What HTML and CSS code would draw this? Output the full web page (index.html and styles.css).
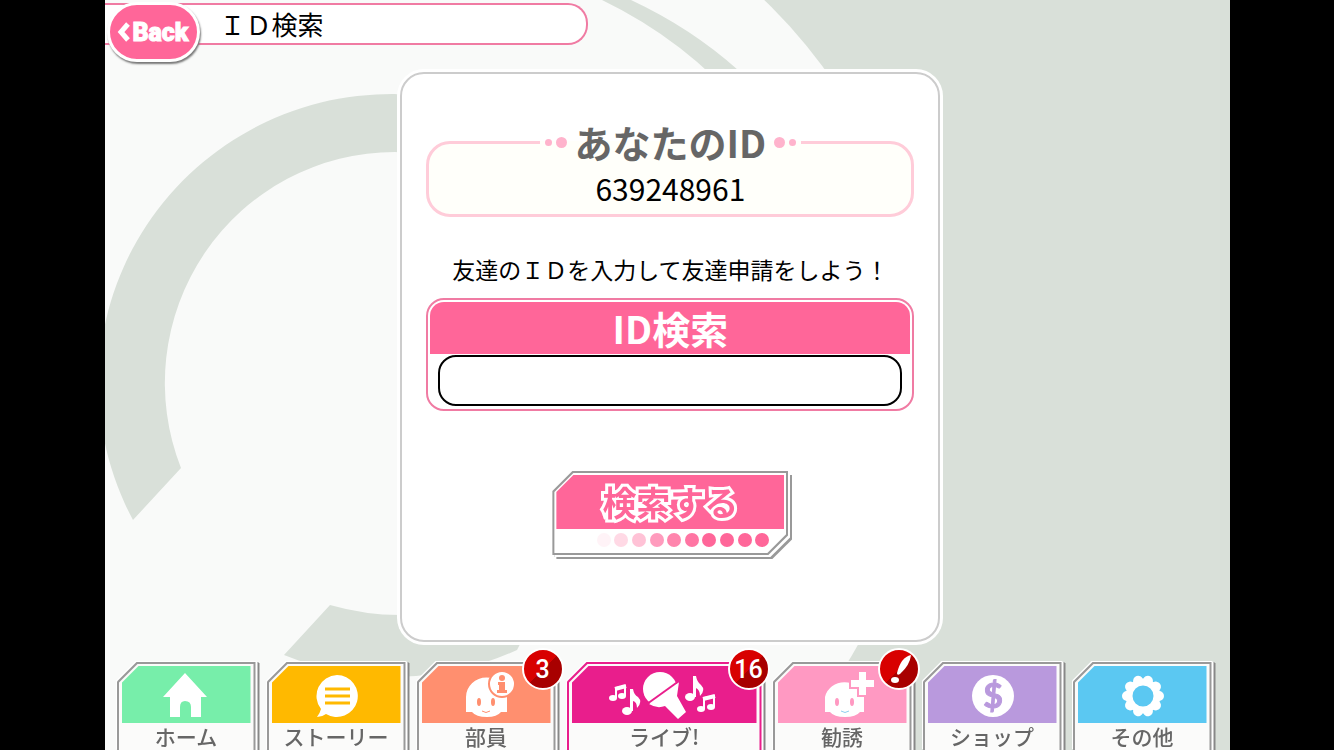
FILE: index.html
```html
<!DOCTYPE html>
<html lang="ja">
<head>
    <meta charset="UTF-8">
    <meta name="viewport" content="width=device-width, initial-scale=1.0">
    <title>ＩＤ検索</title>
    <link rel="stylesheet" href="styles.css">
</head>
<body>
    <div class="stage">
        <svg class="backdrop" viewBox="0 0 1125 750" preserveAspectRatio="none" aria-hidden="true">
            <rect width="1125" height="750" fill="#d9e0d9"/>
            <circle cx="290" cy="383" r="532" fill="#f9faf9"/>
            <path d="M497 0H526Q586 28 633 70L660 110H640Q580 40 497 0Z" fill="#d9e0d9"/>
            <path d="M28 520A293 290 0 0 1 290 94L400 110V160L290 152A230 231 0 0 0 76 468Z" fill="#d9e0d9"/>
            <path d="M225 605Q260 615 295 615H430L412 650A293 293 0 0 1 179 655Z" fill="#d9e0d9"/>
        </svg>

        <header class="top">
            <button class="back" type="button">
                <svg width="13" height="20" viewBox="0 0 13 20" aria-hidden="true"><path d="M11 2L4 10L11 18" fill="none" stroke="#fff" stroke-width="5"/></svg>
                Back
            </button>
            <h1 class="title">ＩＤ検索</h1>
        </header>

        <main class="panel">
            <fieldset class="my-id">
                <legend>
                    <i class="dot small"></i><i class="dot"></i>
                    <span>あなたのID</span>
                    <i class="dot"></i><i class="dot small"></i>
                </legend>
                <p class="number">639248961</p>
            </fieldset>

            <p class="message">友達のＩＤを入力して友達申請をしよう！</p>

            <div class="search">
                <label for="friend-id">ID検索</label>
                <input id="friend-id" type="text" inputmode="numeric">
            </div>

            <button class="submit" type="button">
                <span class="submit-frame">
                    <span class="submit-text">検索する</span>
                    <svg class="dots" width="176" height="16" viewBox="0 0 176 16" aria-hidden="true">
                        <g fill="#ff6699">
                            <circle cx="9" cy="8" r="7" opacity=".08"/>
                            <circle cx="26" cy="8" r="7" opacity=".25"/>
                            <circle cx="44" cy="8" r="7" opacity=".4"/>
                            <circle cx="62" cy="8" r="7" opacity=".65"/>
                            <circle cx="79" cy="8" r="7" opacity=".8"/>
                            <circle cx="97" cy="8" r="7" opacity=".9"/>
                            <circle cx="114" cy="8" r="7"/>
                            <circle cx="132" cy="8" r="7"/>
                            <circle cx="150" cy="8" r="7"/>
                            <circle cx="167" cy="8" r="7"/>
                        </g>
                    </svg>
                </span>
            </button>
        </main>

        <nav class="menu">
            <a class="item home" href="#">
                <span class="shadow"><span class="card">
                    <span class="icon">
                        <svg width="64" height="48" viewBox="0 0 64 48" aria-hidden="true"><path d="M31 3L53 27H47V47H37V37Q37 31 31 31Q26 31 26 37V47H16V27H9Z" fill="#fff"/></svg>
                    </span>
                    <span class="label">ホーム</span>
                </span></span>
            </a>
            <a class="item story" href="#">
                <span class="shadow"><span class="card">
                    <span class="icon">
                        <svg width="64" height="48" viewBox="0 0 64 48" aria-hidden="true">
                            <path d="M33 5A21 21 0 1 1 22 44Q18 47 13 47Q16 43 17 39A21 21 0 0 1 33 5Z" fill="#fff"/>
                            <path d="M21 19H46M21 26H46M21 33H46" stroke="#ffb900" stroke-width="3"/>
                        </svg>
                    </span>
                    <span class="label">ストーリー</span>
                </span></span>
            </a>
            <a class="item member" href="#">
                <span class="shadow"><span class="card">
                    <span class="icon">
                        <svg width="64" height="48" viewBox="0 0 64 48" aria-hidden="true">
                            <path d="M12 42V27A20 19 0 0 1 53 27V42H47Q43 47 33 47Q22 47 18 42Z" fill="#fff"/>
                            <ellipse cx="25" cy="32" rx="2" ry="4" fill="#ff8f6f"/>
                            <ellipse cx="39" cy="32" rx="2" ry="4" fill="#ff8f6f"/>
                            <path d="M28 41Q32 44 36 41" fill="none" stroke="#ff8f6f"/>
                            <circle cx="48" cy="14" r="13" fill="#fff" stroke="#ff8f6f" stroke-width="2"/>
                            <circle cx="48" cy="8" r="3" fill="#ff8f6f"/>
                            <path d="M44 12H51V20H53V23H43V20H45V15H44Z" fill="#ff8f6f"/>
                        </svg>
                    </span>
                    <span class="label">部員</span>
                </span></span>
                <span class="badge">3</span>
            </a>
            <a class="item live" href="#">
                <span class="shadow"><span class="card">
                    <span class="icon">
                        <svg width="110" height="48" viewBox="0 0 110 48" aria-hidden="true">
                            <circle cx="51" cy="19" r="17" fill="#fff"/>
                            <path d="M40 34L70 12L68 26L77 42L69 49L56 36Q48 39 40 34Z" fill="#fff"/>
                            <path d="M38 34L70 11" stroke="#e91e8c" stroke-width="2"/>
                            <g fill="#fff">
                                <ellipse cx="4" cy="28" rx="4" ry="3"/>
                                <ellipse cx="13" cy="26" rx="4" ry="3"/>
                                <ellipse cx="18" cy="41" rx="5" ry="4"/>
                                <path d="M21 19H24Q25 25 29 27Q34 32 28 38Q28 32 24 31V41H21Z"/>
                                <ellipse cx="81" cy="27" rx="5" ry="4"/>
                                <path d="M84 6H87Q88 12 92 15Q97 20 91 26Q91 20 87 18V27H84Z"/>
                                <ellipse cx="92" cy="39" rx="4" ry="3"/>
                                <ellipse cx="102" cy="37" rx="4" ry="3"/>
                            </g>
                            <path d="M7 28V18L16 16V26M95 39V28L105 26V37" fill="none" stroke="#fff" stroke-width="2"/>
                            <path d="M6 19L17 16M94 29L106 26" stroke="#fff" stroke-width="4"/>
                        </svg>
                    </span>
                    <span class="label">ライブ!</span>
                </span></span>
                <span class="badge">16</span>
            </a>
            <a class="item scout" href="#">
                <span class="shadow"><span class="card">
                    <span class="icon">
                        <svg width="64" height="48" viewBox="0 0 64 48" aria-hidden="true">
                            <path d="M15 42V27A20 19 0 0 1 54 27V42H50Q46 47 35 47Q24 47 20 42Z" fill="#fff"/>
                            <ellipse cx="27" cy="32" rx="2" ry="4" fill="#ff99c2"/>
                            <ellipse cx="42" cy="32" rx="2" ry="4" fill="#ff99c2"/>
                            <path d="M31 41Q35 44 39 41" fill="none" stroke="#8fd0ee"/>
                            <path d="M48 1H57V9H65V18H57V26H48V18H40V9H48Z" fill="#fff" stroke="#ff99c2" stroke-width="2"/>
                        </svg>
                    </span>
                    <span class="label">勧誘</span>
                </span></span>
                <span class="badge">
                    <svg width="36" height="36" viewBox="0 0 36 36" role="img" aria-label="お知らせ"><path d="M30 4Q20 6 16 22Q16 25 19 23Q29 14 30 4Z" fill="#fff"/><ellipse cx="14" cy="29" rx="4" ry="3" fill="#fff"/></svg>
                </span>
            </a>
            <a class="item shop" href="#">
                <span class="shadow"><span class="card">
                    <span class="icon">
                        <svg width="64" height="48" viewBox="0 0 64 48" aria-hidden="true">
                            <circle cx="33" cy="26" r="21" fill="#fff"/>
                            <text class="dollar" x="33" y="38" text-anchor="middle">$</text>
                        </svg>
                    </span>
                    <span class="label">ショップ</span>
                </span></span>
            </a>
            <a class="item other" href="#">
                <span class="shadow"><span class="card">
                    <span class="icon">
                        <svg width="64" height="48" viewBox="0 0 64 48" aria-hidden="true">
                            <circle cx="33" cy="26" r="14" fill="none" stroke="#fff" stroke-width="7"/>
                            <circle cx="33" cy="26" r="16" fill="none" stroke="#fff" stroke-width="10" stroke-linecap="round" pathLength="100" stroke-dasharray="0.01 9.99"/>
                        </svg>
                    </span>
                    <span class="label">その他</span>
                </span></span>
            </a>
        </nav>
    </div>
</body>
</html>
```
FILE: styles.css
```css
* {
    box-sizing: border-box;
}

body {
    margin: 0;
    background: #000;
    font-family: "Noto Sans CJK JP", sans-serif;
    color: #000;
    overflow: hidden;
}

.stage {
    position: relative;
    display: flex;
    flex-direction: column;
    height: 100vh;
    aspect-ratio: 3 / 2;
    margin: 0 auto;
    overflow: hidden;
}

.backdrop {
    position: absolute;
    inset: 0;
    width: 100%;
    height: 100%;
    z-index: -1;
}

/* header */
.top {
    display: flex;
    align-items: center;
    width: 43%;
    height: 42px;
    margin-top: 3px;
    padding-left: 2px;
    background: #fff;
    border: 2px solid #f07ba3;
    border-left: 0;
    border-radius: 0 20px 20px 0;
}

.back {
    display: flex;
    align-items: center;
    justify-content: center;
    gap: 2px;
    flex: none;
    width: 93px;
    height: 60px;
    margin-top: 16px;
    padding: 0;
    background: #ff6699;
    border: 3px solid #fff;
    border-radius: 30px;
    box-shadow: 1px 2px 2px #777;
    color: #fff;
    font-family: Roboto, sans-serif;
    font-size: 25px;
    font-weight: 900;
    -webkit-text-stroke: 1px #fff;
    cursor: pointer;
}

.title {
    margin: 0 0 0 20px;
    font-size: 26px;
    font-weight: 400;
    line-height: 38px;
    white-space: nowrap;
}

/* centre panel */
.panel {
    display: flex;
    flex-direction: column;
    align-items: center;
    flex: 1;
    width: 48%;
    margin: 27px 0 20px 26.3%;
    padding: 48px 24px 0;
    background: #fff;
    border: 2px solid #ccc;
    border-radius: 24px;
    box-shadow: 0 0 0 3px #fff;
}

.my-id {
    width: 100%;
    height: 95px;
    margin: 0;
    padding: 0;
    background: #fffffa;
    border: 3px solid #ffccd9;
    border-radius: 24px;
    text-align: center;
}

.my-id legend {
    display: flex;
    align-items: center;
    gap: 4px;
    margin: 0 auto;
    padding: 0 5px;
    color: #666;
    font-size: 38px;
    font-weight: 700;
    line-height: 40px;
}

.my-id legend span {
    margin: 0 4px;
}

.dot {
    width: 11px;
    height: 11px;
    background: #ffb3cc;
    border-radius: 50%;
}

.dot.small {
    width: 7px;
    height: 7px;
}

.number {
    margin: 6px 0 0;
    font-size: 30px;
    line-height: 40px;
}

.message {
    margin: 36px 0 13px;
    font-size: 23px;
    line-height: 32px;
    white-space: nowrap;
}

.search {
    display: flex;
    flex-direction: column;
    width: 100%;
    padding: 2px;
    border: 2px solid #f07ba3;
    border-radius: 18px;
}

.search label {
    background: #ff6699;
    border-radius: 14px 14px 0 0;
    color: #fff;
    font-size: 38px;
    font-weight: 700;
    line-height: 52px;
    text-align: center;
}

.search input {
    height: 51px;
    margin: 1px 8px;
    padding: 0 16px;
    background: #fff;
    border: 2px solid #000;
    border-radius: 18px;
    font: inherit;
    font-size: 26px;
}

.submit {
    width: 236px;
    margin-top: 60px;
    padding: 0;
    background: none;
    border: 0;
    filter: drop-shadow(2px 2px 0 #fff) drop-shadow(2px 2px 0 #999);
    font-family: inherit;
    cursor: pointer;
}

.submit-frame {
    position: relative;
    z-index: 0;
    display: flex;
    flex-direction: column;
    align-items: flex-end;
    padding: 4px;
    background: #999;
    clip-path: polygon(20px 0, 100% 0, 100% calc(100% - 20px), calc(100% - 20px) 100%, 0 100%, 0 20px);
}

.submit-frame::before {
    content: "";
    position: absolute;
    inset: 2px;
    z-index: -1;
    background: #fff;
    clip-path: polygon(19px 0, 100% 0, 100% calc(100% - 19px), calc(100% - 19px) 100%, 0 100%, 0 19px);
}

.submit-text {
    width: 100%;
    background: #ff6699;
    clip-path: polygon(17px 0, 100% 0, 100% 100%, 0 100%, 0 17px);
    color: #ff6699;
    font-size: 34px;
    font-weight: 700;
    line-height: 54px;
    -webkit-text-stroke: 6px #fff;
    paint-order: stroke fill;
}

.dots {
    margin: 3px 13px 3px 0;
}

/* bottom menu */
.menu {
    display: flex;
    flex: none;
    gap: 11px;
    height: 88px;
    padding: 0 18px 0 12px;
}

.item {
    position: relative;
    flex: 139;
    color: #666;
    text-decoration: none;
}

.shadow {
    display: block;
    height: 100%;
    filter: drop-shadow(-1px -1px 0 #fff) drop-shadow(2px 0 0 #fff) drop-shadow(2px 1px 0 #888);
}

.card {
    position: relative;
    z-index: 0;
    display: flex;
    flex-direction: column;
    height: 100%;
    padding: 4px 5px 0;
    background: #999;
    clip-path: polygon(20px 0, 100% 0, 100% 110%, 0 110%, 0 20px);
}

.card::before {
    content: "";
    position: absolute;
    inset: 2px 2px 0;
    z-index: -1;
    background: #fbfbfa;
    clip-path: polygon(19px 0, 100% 0, 100% 100%, 0 100%, 0 19px);
}

.icon {
    display: flex;
    justify-content: center;
    height: 57px;
    padding-top: 4px;
    clip-path: polygon(17px 0, 100% 0, 100% 100%, 0 100%, 0 17px);
}

.icon svg {
    overflow: visible;
}

.label {
    font-size: 21px;
    font-weight: 500;
    line-height: 27px;
    text-align: center;
    white-space: nowrap;
}

.home .icon {
    background: #77eeaa;
}

.story .icon {
    background: #ffb900;
}

.member .icon {
    background: #ff8f6f;
}

.live {
    flex: 195;
}

.live .card,
.live .icon {
    background: #e91e8c;
}

.scout .icon {
    background: #ff99c2;
}

.shop .icon {
    background: #b999dd;
}

.other .icon {
    background: #5bc8f2;
}

.dollar {
    fill: #b999dd;
    stroke: #b999dd;
    font-family: Lato, sans-serif;
    font-size: 34px;
    font-weight: 700;
}

.badge {
    position: absolute;
    top: -14px;
    right: -8px;
    z-index: 1;
    display: flex;
    align-items: center;
    justify-content: center;
    width: 42px;
    height: 42px;
    background: linear-gradient(135deg, #d80000 50%, #a80000 50%);
    border: 2px solid #fff;
    border-radius: 50%;
    color: #fff;
    font-family: Roboto, sans-serif;
    font-size: 25px;
    font-weight: 500;
}
```
